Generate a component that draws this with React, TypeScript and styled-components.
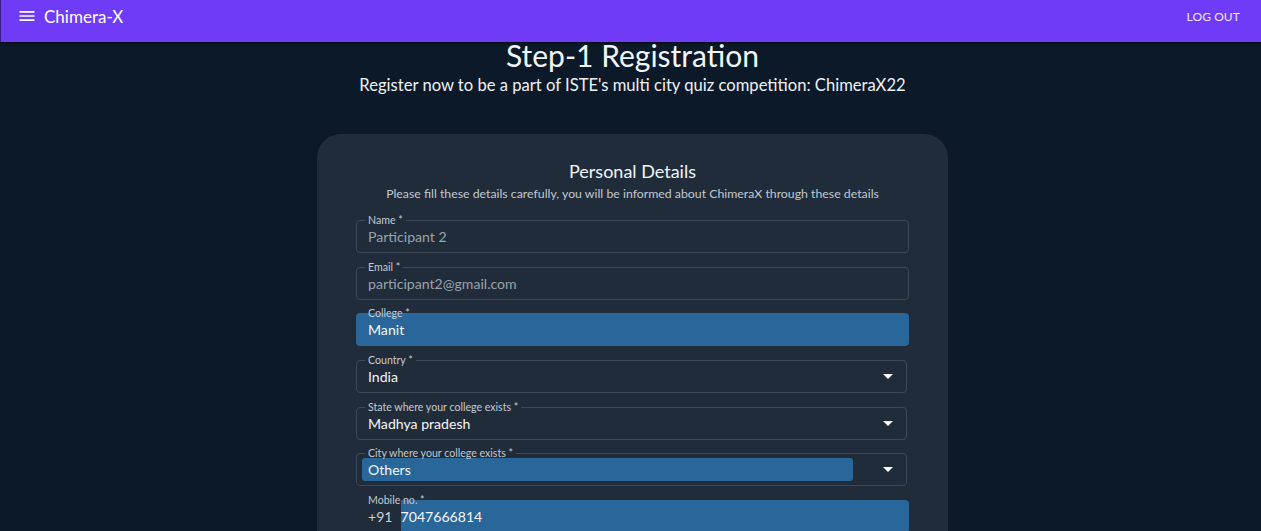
import React from "react";
import styled, { createGlobalStyle } from "styled-components";

const GlobalStyle = createGlobalStyle`
  html, body { margin: 0; padding: 0; }
  body {
    background: #0b1929;
    font-family: Lato, "Noto Sans", sans-serif;
    color: #fff;
    overflow: hidden;
  }
  * { box-sizing: border-box; }
`;

const Page = styled.div`
  width: 1261px;
  height: 531px;
  background: #0b1929;
  overflow: hidden;
  display: flex;
  flex-direction: column;
`;

const AppBar = styled.header`
  height: 42px;
  flex: none;
  background: #6f3bf6;
  border-left: 1px solid #3a1f8a;
  box-shadow: 0 1px 2px rgba(0, 0, 0, 0.6);
  display: flex;
  align-items: center;
  justify-content: space-between;
  padding: 0 21px 0 16px;
  position: relative;
  z-index: 2;
`;

const Brand = styled.div`
  display: flex;
  align-items: center;
  gap: 7px;
  font-size: 17px;
  color: #fff;
  margin-top: -10px;
`;

const MenuIcon = styled.svg`
  width: 20px;
  height: 20px;
  fill: #fff;
`;

const LogOut = styled.button`
  background: none;
  border: 0;
  color: #efe8ff;
  font-family: inherit;
  font-size: 12px;
  letter-spacing: 0.1px;
  text-transform: uppercase;
  padding: 0;
  margin-top: -10px;
  cursor: pointer;
`;

const Main = styled.main`
  display: flex;
  flex-direction: column;
  align-items: center;
  padding-left: 4px;
`;

const Heading = styled.h1`
  margin: 0;
  font-weight: 400;
  font-size: 30px;
  line-height: 26px;
  color: #f2f5f8;
`;

const Sub = styled.p`
  margin: 6px 0 0;
  font-size: 16.6px;
  line-height: 22px;
  color: #eef2f6;
`;

const Card = styled.section`
  margin-top: 38px;
  width: 631px;
  background: #202c3a;
  border-radius: 24px;
  padding: 26px 39px 40px;
  display: flex;
  flex-direction: column;
`;

const CardTitle = styled.h2`
  margin: 0;
  font-weight: 400;
  font-size: 18px;
  line-height: 22px;
  text-align: center;
  color: #f2f5f8;
`;

const CardSub = styled.p`
  margin: 3px 0 0;
  font-size: 12.3px;
  line-height: 18px;
  text-align: center;
  color: #c2c9d1;
`;

const Fields = styled.div`
  margin-top: 17px;
  display: flex;
  flex-direction: column;
  gap: 13.67px;
`;

const FieldRoot = styled.div<{ $filled?: boolean; $narrow?: boolean }>`
  position: relative;
  height: 33px;
  flex: none;
  width: ${(p) => (p.$narrow ? "551px" : "553px")};
  border-radius: 4px;
  background: ${(p) => (p.$filled ? "#29669a" : "transparent")};
  display: flex;
  align-items: center;
  padding: 0 11px 0 12px;
`;

const Outline = styled.fieldset<{ $hidden?: boolean }>`
  position: absolute;
  inset: -5px 0 0 0;
  margin: 0;
  padding: 0 8px;
  border: 1px solid ${(p) => (p.$hidden ? "transparent" : "#3d4958")};
  border-radius: 4px;
  pointer-events: none;
  & > legend {
    padding: 0 3px;
    margin-left: 0;
    font-size: 10.6px;
    line-height: 11px;
    height: 11px;
    color: #c3cad2;
    white-space: nowrap;
  }
`;

const Value = styled.span<{ $muted?: boolean }>`
  font-size: 14.1px;
  color: ${(p) => (p.$muted ? "#9aa3ad" : "#f4f6f8")};
  white-space: nowrap;
`;

const SelectValue = styled.span<{ $highlight?: boolean }>`
  flex: 1;
  font-size: 14.1px;
  color: #f4f6f8;
  padding: 3px 6px;
  margin-left: -6px;
  margin-right: 43px;
  border-radius: 3px;
  background: ${(p) => (p.$highlight ? "#29669a" : "transparent")};
`;

const Arrow = styled.svg`
  position: absolute;
  right: 7px;
  top: 4px;
  width: 24px;
  height: 24px;
  fill: #fff;
`;

const Adornment = styled.span`
  font-size: 14.1px;
  color: #c9d0d7;
  margin-right: 8px;
`;

const PhoneInput = styled.span`
  flex: 1;
  align-self: stretch;
  display: flex;
  align-items: center;
  margin-right: -11px;
  background: #29669a;
  border-radius: 0 4px 4px 0;
  font-size: 14.1px;
  color: #f4f6f8;
`;

const TextField = ({ label, value, muted, filled }: { label: string; value: string; muted?: boolean; filled?: boolean }) => (
  <FieldRoot $filled={filled}>
    <Value $muted={muted}>{value}</Value>
    <Outline $hidden={filled}>
      <legend>{label} *</legend>
    </Outline>
  </FieldRoot>
);

const SelectField = ({ label, value, highlight }: { label: string; value: string; highlight?: boolean }) => (
  <FieldRoot $narrow>
    <SelectValue $highlight={highlight}>{value}</SelectValue>
    <Arrow viewBox="0 0 24 24">
      <path d="M7 10l5 5 5-5z" />
    </Arrow>
    <Outline>
      <legend>{label} *</legend>
    </Outline>
  </FieldRoot>
);

export default function App() {
  return (
    <Page>
      <GlobalStyle />
      <AppBar>
        <Brand>
          <MenuIcon viewBox="0 0 24 24">
            <path d="M3 18h18v-2H3v2zm0-5h18v-2H3v2zm0-7v2h18V6H3z" />
          </MenuIcon>
          Chimera-X
        </Brand>
        <LogOut>Log out</LogOut>
      </AppBar>
      <Main>
        <Heading>Step-1 Registration</Heading>
        <Sub>Register now to be a part of ISTE's multi city quiz competition: ChimeraX22</Sub>
        <Card>
          <CardTitle>Personal Details</CardTitle>
          <CardSub>Please fill these details carefully, you will be informed about ChimeraX through these details</CardSub>
          <Fields>
            <TextField label="Name" value="Participant 2" muted />
            <TextField label="Email" value="participant2@gmail.com" muted />
            <TextField label="College" value="Manit" filled />
            <SelectField label="Country" value="India" />
            <SelectField label="State where your college exists" value="Madhya pradesh" />
            <SelectField label="City where your college exists" value="Others" highlight />
            <FieldRoot>
              <Adornment>+91</Adornment>
              <PhoneInput>7047666814</PhoneInput>
              <Outline $hidden>
                <legend>Mobile no. *</legend>
              </Outline>
            </FieldRoot>
          </Fields>
        </Card>
      </Main>
    </Page>
  );
}
